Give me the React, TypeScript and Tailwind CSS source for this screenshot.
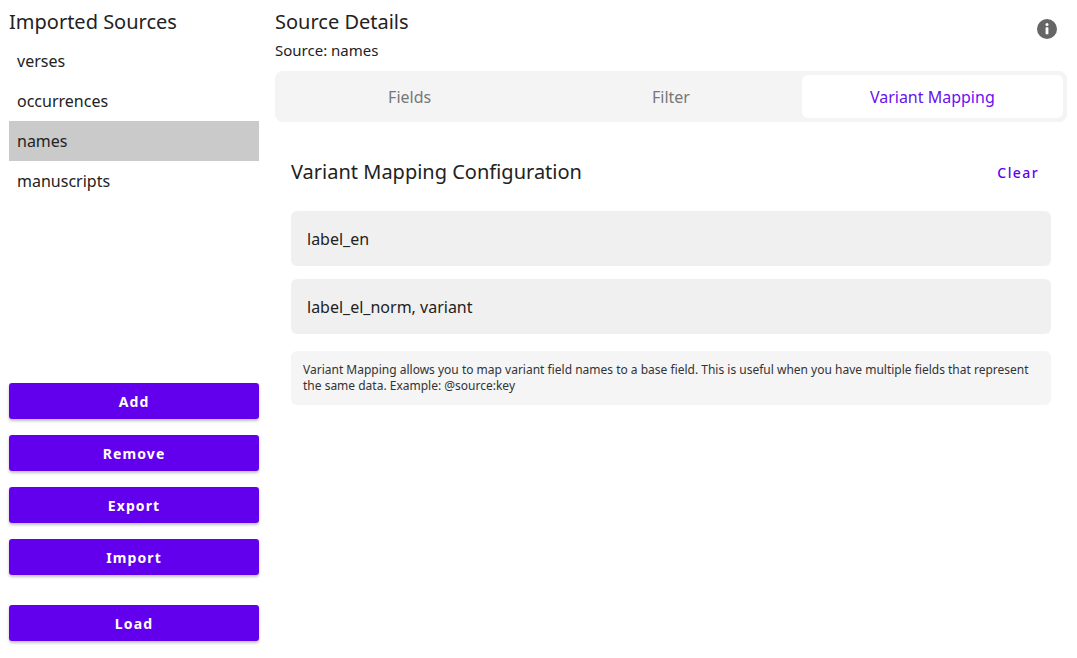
const SOURCES = ['verses', 'occurrences', 'names', 'manuscripts'];
const ACTIONS = ['Add', 'Remove', 'Export', 'Import'];
const TABS = ['Fields', 'Filter', 'Variant Mapping'];

function ActionButton({ label }: { label: string }) {
  return (
    <button className="h-9 w-full rounded-[3px] bg-[#6200ee] text-[14px] font-bold tracking-[0.08em] text-white shadow-[0_2px_3px_rgba(0,0,0,0.25)]">
      {label}
    </button>
  );
}

export default function App() {
  return (
    <div className="flex h-[658px] w-[1077px] bg-white text-[#222] font-['Noto_Sans',sans-serif]">
      <aside className="flex w-[250px] flex-col ml-[9px]">
        <h1 className="pt-[8px] h-[41px] text-[20px] leading-[28px] text-[#222]">Imported Sources</h1>
        <ul>
          {SOURCES.map((s) => (
            <li
              key={s}
              className={`flex h-10 items-center pl-2 text-[16px] ${s === 'names' ? 'bg-[#cacaca]' : ''}`}
            >
              {s}
            </li>
          ))}
        </ul>
        <div className="mt-[182px] flex flex-col gap-4">
          {ACTIONS.map((a) => (
            <ActionButton key={a} label={a} />
          ))}
        </div>
        <div className="mt-[30px]">
          <ActionButton label="Load" />
        </div>
      </aside>

      <main className="ml-4 mr-[10px] flex-1">
        <div className="flex items-start justify-between">
          <div>
            <h2 className="pt-[8px] text-[20px] leading-[28px]">Source Details</h2>
            <p className="mt-[3px] text-[15px] leading-[22px]">Source: names</p>
          </div>
          <svg width="20" height="20" viewBox="0 0 20 20" className="mt-[19px] mr-[10px]">
            <circle cx="10" cy="10" r="10" fill="#666" />
            <circle cx="10" cy="5.6" r="1.5" fill="white" />
            <rect x="8.6" y="8.3" width="2.8" height="7" rx="0.6" fill="white" />
          </svg>
        </div>

        <div className="mt-[10px] flex h-[51px] rounded-[8px] bg-[#f4f4f4] p-1">
          {TABS.map((t) => (
            <div
              key={t}
              className={`flex flex-1 items-center justify-center rounded-[6px] text-[16px] ${
                t === 'Variant Mapping' ? 'bg-white text-[#6a10f0]' : 'text-[#777]'
              }`}
            >
              {t}
            </div>
          ))}
        </div>

        <div className="px-4 pt-[36px]">
          <div className="flex items-center justify-between">
            <h3 className="text-[20px] leading-[28px]">Variant Mapping Configuration</h3>
            <button className="mr-3 text-[14px] font-medium tracking-[0.1em] text-[#6200ee]">Clear</button>
          </div>
          <div className="mt-[25px] flex flex-col gap-[13px]">
            {['label_en', 'label_el_norm, variant'].map((r) => (
              <div key={r} className="flex h-[55px] items-center rounded-[6px] bg-[#f0f0f0] px-4 text-[16px]">
                {r}
              </div>
            ))}
          </div>
          <div className="mt-[17px] rounded-[6px] bg-[#f5f5f5] px-3 py-[11px] text-[12px] leading-[16px] text-[#333]">
            Variant Mapping allows you to map variant field names to a base field. This is useful when you have
            multiple fields that represent the same data. Example: @source:key
          </div>
        </div>
      </main>
    </div>
  );
}
